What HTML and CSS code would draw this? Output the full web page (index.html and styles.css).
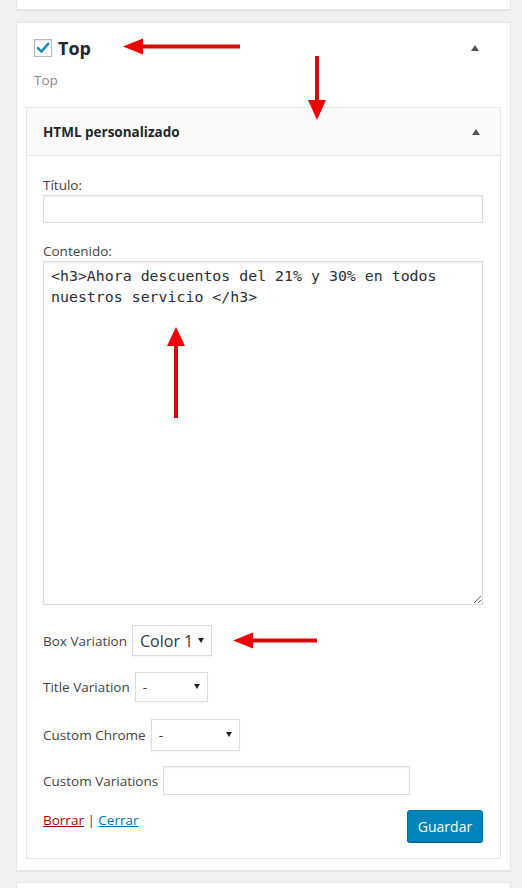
FILE: index.html
```html
<!DOCTYPE html>
<html lang="es">
<head>
    <meta charset="UTF-8">
    <meta name="viewport" content="width=device-width, initial-scale=1.0">
    <title>Widgets</title>
    <link rel="stylesheet" href="styles.css">
</head>
<body>
    <div class="card card-prev"></div>

    <div class="card">
        <div class="sidebar-head">
            <label class="sidebar-title">
                <span class="check">
                    <svg width="16" height="16" viewBox="0 0 16 16"><path d="M3 8.2 L6.4 11.6 L13.2 3.8" fill="none" stroke="#1e8cbe" stroke-width="2.6" stroke-linecap="round" stroke-linejoin="round"/></svg>
                </span>
                Top
            </label>
            <span class="toggle"></span>
        </div>
        <p class="sidebar-desc">Top</p>

        <div class="widget">
            <div class="widget-top">
                <h3>HTML personalizado</h3>
                <span class="toggle"></span>
            </div>
            <div class="widget-inside">
                <label class="field-label">Título:</label>
                <input type="text" class="text-input">

                <label class="field-label label-content">Contenido:</label>
                <textarea class="code-area">&lt;h3&gt;Ahora descuentos del 21% y 30% en todos nuestros servicio &lt;/h3&gt;</textarea>

                <div class="opt-row row-box">
                    <span>Box Variation</span>
                    <span class="select sel-box">Color 1</span>
                </div>
                <div class="opt-row row-title">
                    <span>Title Variation</span>
                    <span class="select sel-title">-</span>
                </div>
                <div class="opt-row row-chrome">
                    <span>Custom Chrome</span>
                    <span class="select sel-chrome">-</span>
                </div>
                <div class="opt-row row-custom">
                    <span>Custom Variations</span>
                    <input type="text" class="text-input input-custom">
                </div>

                <div class="actions">
                    <div class="links">
                        <a href="#" class="link-delete">Borrar</a> | <a href="#" class="link-close">Cerrar</a>
                    </div>
                    <button class="btn-save">Guardar</button>
                </div>
            </div>
        </div>
    </div>

    <div class="card card-next"></div>

    <svg class="arrows" width="522" height="888" viewBox="0 0 522 888">
        <line x1="240" y1="46.5" x2="140" y2="46.5" class="shaft"/>
        <polygon points="123,46.5 143,38.5 143,54.5" class="head"/>
        <line x1="317" y1="56" x2="317" y2="102" class="shaft"/>
        <polygon points="317,120 308,100 326,100" class="head"/>
        <line x1="176" y1="418" x2="176" y2="343" class="shaft"/>
        <polygon points="176,327 167,346 185,346" class="head"/>
        <line x1="317" y1="640.5" x2="250" y2="640.5" class="shaft"/>
        <polygon points="233,640.5 253,632.5 253,648.5" class="head"/>
    </svg>
</body>
</html>
```

FILE: styles.css
```css
body {
    margin: 0;
    background: #f1f1f1;
    font-family: "Open Sans", sans-serif;
    font-size: 13.5px;
    color: #444;
    position: relative;
    height: 888px;
    overflow: hidden;
}
.card {
    background: #fff;
    border: 1px solid #e5e5e5;
    box-shadow: 0 1px 1px rgba(0, 0, 0, 0.04);
    margin: 12px 11px 0 16px;
    padding: 0 9px 11px;
}
.card-prev {
    margin-top: 0;
    border-top: none;
    height: 9px;
    padding: 0;
}
.card-next {
    margin-top: 11px;
    height: 30px;
    padding: 0;
}
.sidebar-head {
    display: flex;
    align-items: center;
    justify-content: space-between;
    padding: 13px 22px 0 8px;
    height: 24px;
}
.sidebar-title {
    display: flex;
    align-items: center;
    gap: 6px;
    font-size: 18px;
    font-weight: bold;
    color: #23282d;
}
.check {
    width: 16px;
    height: 16px;
    border: 1px solid #b4b9be;
    box-shadow: inset 0 1px 2px rgba(0, 0, 0, 0.1);
    display: flex;
}
.toggle {
    width: 0;
    height: 0;
    border-left: 4px solid transparent;
    border-right: 4px solid transparent;
    border-bottom: 6px solid #555;
}
.sidebar-desc {
    margin: 10px 0 0 8px;
    line-height: 20px;
    color: #888;
    font-size: 13.5px;
}
.widget {
    margin-top: 17px;
    border: 1px solid #e5e5e5;
}
.widget-top {
    background: #fafafa;
    border-bottom: 1px solid #e5e5e5;
    height: 47px;
    display: flex;
    align-items: center;
    justify-content: space-between;
    padding: 0 20px 0 16px;
}
.widget-top h3 {
    margin: 0;
    font-size: 13.5px;
    color: #23282d;
}
.widget-inside {
    padding: 20px 17px 16px 16px;
    display: flex;
    flex-direction: column;
}
.field-label {
    line-height: 18px;
    margin-bottom: 1px;
}
.label-content {
    margin-top: 19px;
}
.text-input {
    box-sizing: border-box;
    height: 28px;
    border: 1px solid #ddd;
    box-shadow: inset 0 1px 2px rgba(0, 0, 0, 0.07);
    margin: 0;
    padding: 3px 5px;
    font: inherit;
}
.code-area {
    box-sizing: border-box;
    height: 344px;
    border: 1px solid #ddd;
    box-shadow: inset 0 1px 2px rgba(0, 0, 0, 0.07);
    margin: 0;
    padding: 4px 7px;
    font-family: "DejaVu Sans Mono", monospace;
    font-size: 14.9px;
    line-height: 21px;
    color: #2a2e32;
    resize: vertical;
}
.opt-row {
    display: flex;
    align-items: center;
    gap: 5px;
}
.row-box { margin-top: 20px; }
.row-title { margin-top: 16px; }
.row-chrome { margin-top: 17px; }
.row-custom { margin-top: 15px; }
.select {
    box-sizing: border-box;
    position: relative;
    border: 1px solid #ddd;
    box-shadow: 0 1px 2px rgba(0, 0, 0, 0.05);
    display: flex;
    align-items: center;
    padding-left: 7px;
    color: #32373c;
}
.select::after {
    content: "";
    position: absolute;
    right: 7px;
    top: 50%;
    margin-top: -3px;
    border-left: 3px solid transparent;
    border-right: 3px solid transparent;
    border-top: 5px solid #222;
}
.sel-box {
    width: 80px;
    height: 31px;
    font-size: 16px;
}
.sel-title {
    width: 73px;
    height: 30px;
}
.sel-chrome {
    width: 89px;
    height: 32px;
}
.input-custom {
    width: 247px;
    height: 29px;
}
.actions {
    margin-top: 15px;
    display: flex;
    justify-content: space-between;
    align-items: flex-start;
}
.links {
    line-height: 20px;
}
.link-delete {
    color: #a00;
}
.link-close {
    color: #0073aa;
}
.btn-save {
    width: 76px;
    height: 32px;
    background: #0085ba;
    border: 1px solid #0073aa;
    border-radius: 3px;
    box-shadow: 0 1px 0 #006799;
    color: #fff;
    font: inherit;
    font-size: 14px;
}
.arrows {
    position: absolute;
    top: 0;
    left: 0;
    pointer-events: none;
}
.arrows .shaft {
    stroke: #d40b0b;
    stroke-width: 4;
}
.arrows .head {
    fill: #f00000;
}
```
